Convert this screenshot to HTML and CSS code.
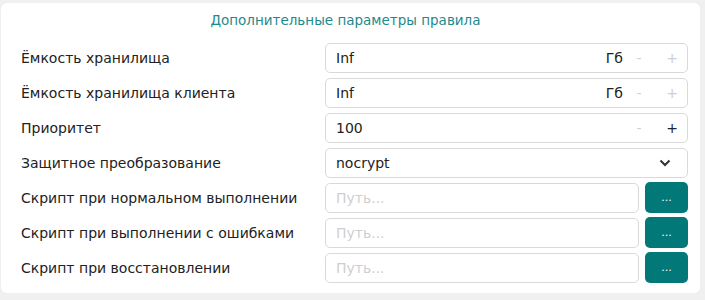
FILE: index.html
```html
<!DOCTYPE html>
<html>
<head>
<meta charset="utf-8">
<title>Дополнительные параметры правила</title>
<link rel="stylesheet" href="styles.css">
</head>
<body>
<div class="card">
  <div class="title">Дополнительные параметры правила</div>
  <div class="form">
    <div class="label">Ёмкость хранилища</div>
    <div class="box">
      <span class="val">Inf</span>
      <span class="unit">Гб</span>
      <span class="step off">-</span>
      <span class="step off">+</span>
    </div>

    <div class="label">Ёмкость хранилища клиента</div>
    <div class="box">
      <span class="val">Inf</span>
      <span class="unit">Гб</span>
      <span class="step off">-</span>
      <span class="step off">+</span>
    </div>

    <div class="label">Приоритет</div>
    <div class="box">
      <span class="val">100</span>
      <span class="step off">-</span>
      <span class="step">+</span>
    </div>

    <div class="label">Защитное преобразование</div>
    <div class="box">
      <span class="val">nocrypt</span>
      <svg class="chev" width="12" height="8" viewBox="0 0 12 8"><path d="M1.5 1.5 L6 6 L10.5 1.5" fill="none" stroke="#333" stroke-width="2"/></svg>
    </div>

    <div class="label">Скрипт при нормальном выполнении</div>
    <div class="pathrow">
      <div class="box"><span class="ph">Путь...</span></div>
      <button class="btn">...</button>
    </div>

    <div class="label">Скрипт при выполнении с ошибками</div>
    <div class="pathrow">
      <div class="box"><span class="ph">Путь...</span></div>
      <button class="btn">...</button>
    </div>

    <div class="label">Скрипт при восстановлении</div>
    <div class="pathrow">
      <div class="box"><span class="ph">Путь...</span></div>
      <button class="btn">...</button>
    </div>
  </div>
</div>
</body>
</html>
```
FILE: styles.css
```css
body {
  margin: 0;
  background: #f0f0f0;
  font-family: "DejaVu Sans", sans-serif;
  font-size: 14px;
  color: #222222;
}
.card {
  margin: 3px 5px 6px 1px;
  background: #ffffff;
  border-radius: 6px;
  padding: 7px 12px 10px 20px;
}
.title {
  text-align: center;
  color: #1e8a8c;
  font-size: 13.5px;
  line-height: 20px;
  height: 20px;
  margin-bottom: 13px;
  margin-left: -18px;
}
.form {
  display: grid;
  grid-template-columns: 304px 1fr;
  row-gap: 5px;
}
.label {
  display: flex;
  align-items: center;
  height: 30px;
}
.box {
  display: flex;
  align-items: center;
  height: 30px;
  box-sizing: border-box;
  border: 1px solid #d9d9d9;
  border-radius: 5px;
  padding: 0 7px 0 10px;
}
.val {
  flex: 1;
}
.unit {
  margin-right: 8px;
}
.step {
  width: 16px;
  text-align: center;
  color: #222222;
}
.step + .step {
  margin-left: 17px;
}
.step.off {
  color: #d0d0d0;
}
.chev {
  margin-right: 9px;
}
.ph {
  color: #cfcfcf;
}
.pathrow {
  display: flex;
  gap: 6px;
}
.pathrow .box {
  flex: 1;
}
.btn {
  width: 43px;
  height: 31px;
  margin-top: -1px;
  border: none;
  border-radius: 5px;
  background: #037878;
  color: #ffffff;
  font-family: "DejaVu Sans", sans-serif;
  font-size: 11px;
  padding: 0;
}
```
